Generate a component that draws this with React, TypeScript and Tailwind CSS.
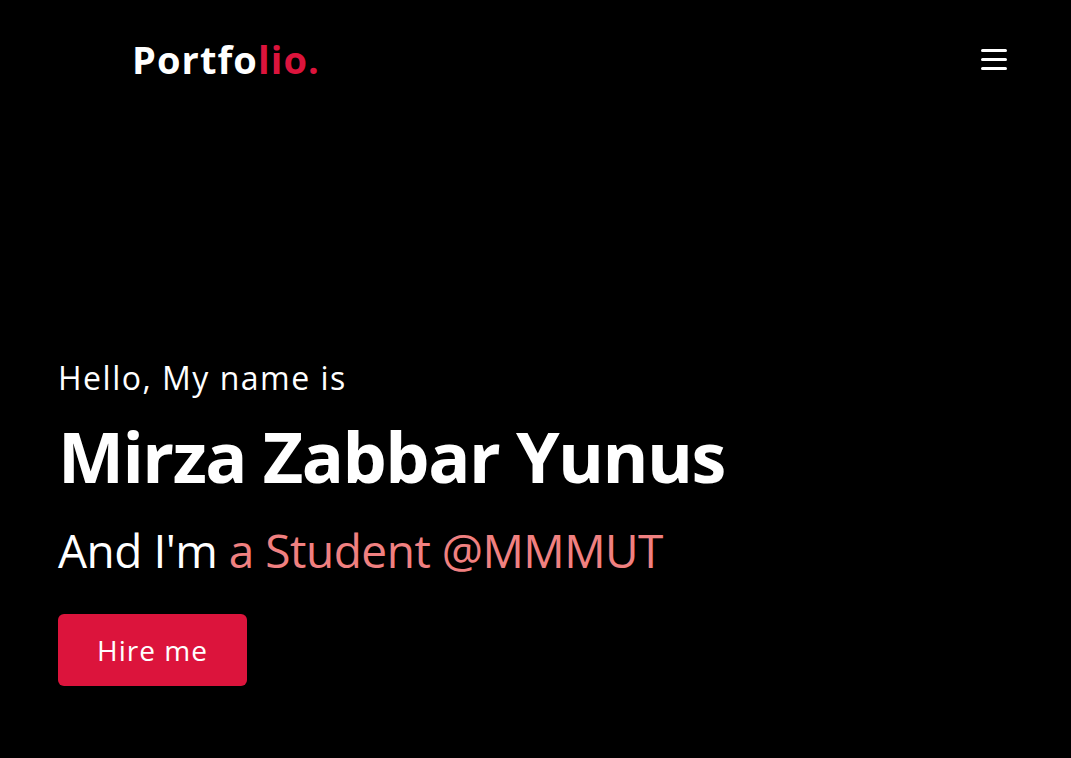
const FONT = "font-['Open_Sans',sans-serif]";

function Navbar() {
  return (
    <header className="flex h-[118px] items-center justify-between pl-[132px] pr-[64px]">
      <a href="#" className="text-[38px] font-bold leading-none tracking-[1.1px] text-white">
        Portfo<span className="text-[#dc143c]">lio.</span>
      </a>
      <button aria-label="Menu" className="flex w-[26px] flex-col gap-[6px]">
        <span className="h-[3px] w-full rounded-sm bg-white" />
        <span className="h-[3px] w-full rounded-sm bg-white" />
        <span className="h-[3px] w-full rounded-sm bg-white" />
      </button>
    </header>
  );
}

function Hero() {
  return (
    <section className="flex flex-col items-start pl-[58px] pt-[240px]">
      <p className="text-[32px] leading-[40px] tracking-[1.5px] text-white">Hello, My name is</p>
      <h1 className="mt-[18px] text-[70px] font-bold leading-[80px] tracking-[-1.5px] text-white">
        Mirza Zabbar Yunus
      </h1>
      <h3 className="mt-[26px] text-[46px] leading-[56px] tracking-[-0.5px] text-white">
        And I'm <span className="text-[#f08080]">a Student @MMMUT</span>
      </h3>
      <a
        href="#"
        className="mt-[36px] flex h-[72px] w-[189px] items-center justify-center rounded-md bg-[#dc143c] text-[28px] tracking-[1px] text-white"
      >
        Hire me
      </a>
    </section>
  );
}

export default function App() {
  return (
    <div className={`min-h-screen bg-black ${FONT}`}>
      <Navbar />
      <Hero />
    </div>
  );
}
